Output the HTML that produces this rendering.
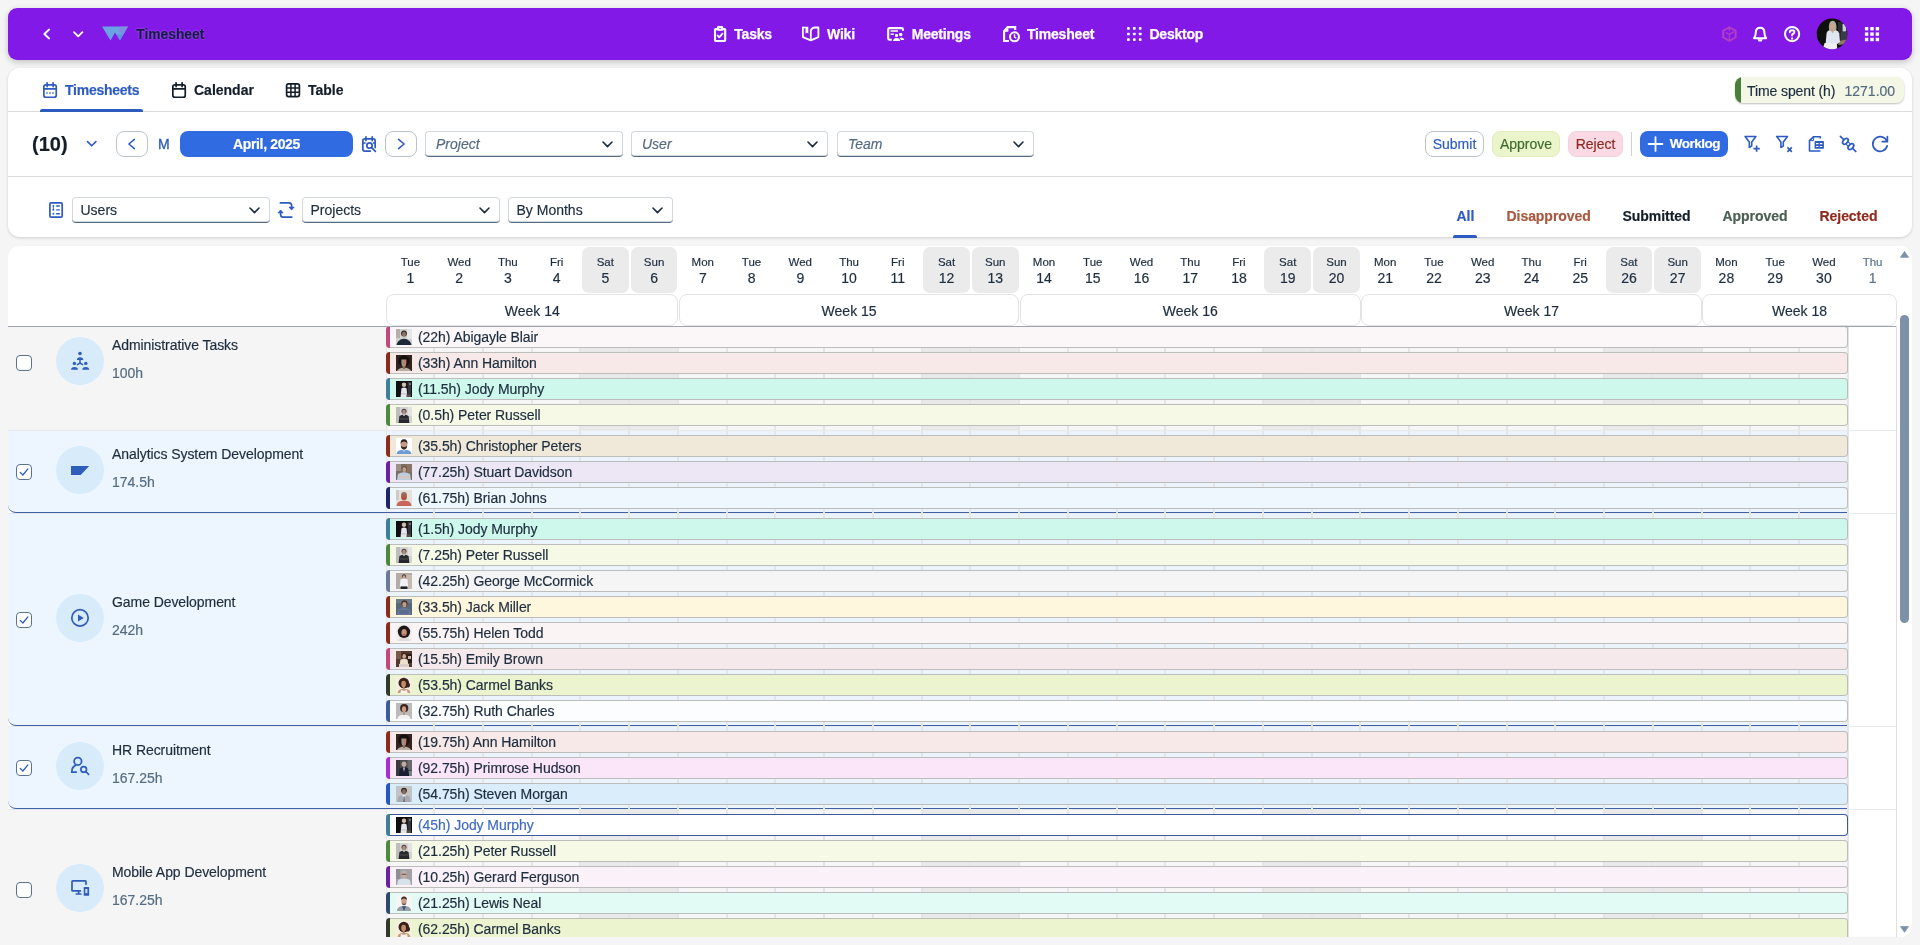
<!DOCTYPE html><html><head><meta charset="utf-8"><title>Timesheet</title><style>
*{box-sizing:border-box}
html,body{margin:0;padding:0}
body{width:1920px;height:945px;overflow:hidden;position:relative;background:#f5f5f5;font-family:"Liberation Sans",sans-serif;font-size:14px;color:#1d2d3e}
#root{position:absolute;left:0;top:0;width:1920px;height:945px;overflow:hidden;will-change:transform;-webkit-text-stroke:0.18px currentColor}
.abs{position:absolute}
.hdr{position:absolute;left:8px;top:8px;width:1904px;height:52px;background:#8319e6;border-radius:9px;box-shadow:0 2px 6px rgba(0,0,0,.22)}
.ov{position:absolute;left:0;top:0;pointer-events:none}
.nav{position:absolute;top:26px;line-height:16px;color:#fff;font-weight:bold;font-size:14px;white-space:nowrap;letter-spacing:-0.2px;-webkit-text-stroke:0.25px currentColor}
.p1{position:absolute;left:8px;top:68px;width:1904px;height:169px;background:#fff;border-radius:12px;box-shadow:0 1px 3px rgba(0,0,0,.16)}
.p2{position:absolute;left:8px;top:246px;width:1904px;height:691px;background:#fff;border-radius:12px;overflow:hidden}
.t{position:absolute;white-space:nowrap;line-height:16px}
.b{font-weight:bold}
.sel{position:absolute;height:26px;background:#fff;border-radius:4px;box-shadow:inset 0 0 0 1px #d3d8dd;border-bottom:1px solid #556b82}
.sel .tx{position:absolute;left:8.5px;top:5px;line-height:16px;white-space:nowrap}
.sel .ph{font-style:italic;color:#556b82;left:11px}
.sel svg{position:absolute;right:10px;top:10px}
.btn{position:absolute;top:131px;height:26px;border-radius:8px;line-height:24px;text-align:center;border:1px solid #bcc3ca;white-space:nowrap}
.hl{position:absolute;left:8px;width:1904px;height:1px;background:#d9dbdd}
.day{position:absolute;top:247px;height:46px;border-radius:7px;text-align:center}
.day.we{background:#ebebeb}
.day .d1{position:absolute;left:0;right:0;top:9px;font-size:11.5px;line-height:13px}
.day .d2{position:absolute;left:0;right:0;top:22.5px;font-size:14px;line-height:16px}
.wk{position:absolute;top:294px;height:32px;border:1px solid #e3e3e3;border-radius:8px;text-align:center;line-height:33.4px;background:#fff}
.row{position:absolute;left:8px;width:378px}
.row.s{background:#edf6fe;border-bottom:1px solid #3f5fa8;border-bottom-left-radius:8px}
.grow{position:absolute}
.bar{position:absolute;height:22px;border:1px solid #bdbebb;border-left:none;border-radius:4px}
.bar .st{position:absolute;left:0;top:-1px;width:4px;height:22px;border-radius:4px 0 0 4px}
.bar .tx{position:absolute;left:32px;top:2.4px;line-height:16px;white-space:nowrap;letter-spacing:-0.06px}
.av{position:absolute;left:10px;top:2px;width:16px;height:16px;overflow:hidden}
.cb{position:absolute;left:16px;width:16px;height:16px;border:1px solid #5b738b;border-radius:4px;background:#fff}
.circ{position:absolute;left:56px;width:48px;height:48px;border-radius:50%;background:#d8ebfb}
</style></head><body><div id="root"><div class="hdr"></div>
<div class="nav" style="left:136.3px;color:#17194b;top:27px;-webkit-text-stroke:0.2px currentColor;text-shadow:0 0 2px rgba(196,160,255,.7);font-size:13.8px;letter-spacing:0">Timesheet</div>
<div class="nav" style="left:734.3px;color:#fff">Tasks</div>
<div class="nav" style="left:827px;color:#fff">Wiki</div>
<div class="nav" style="left:911.7px;color:#fff">Meetings</div>
<div class="nav" style="left:1027px;color:#fff">Timesheet</div>
<div class="nav" style="left:1149.4px;color:#fff">Desktop</div>
<div class="p1"></div>
<div class="hl" style="top:111px"></div>
<div class="hl" style="top:176px"></div>
<div class="t b" style="left:65px;top:82px;color:#2d5bc0;letter-spacing:-0.25px">Timesheets</div>
<div class="abs" style="left:40px;top:109px;width:103px;height:3px;background:#2d5bc0;border-radius:2px 2px 0 0"></div>
<div class="t b" style="left:194px;top:82px;color:#131e29">Calendar</div>
<div class="t b" style="left:308px;top:82px;color:#131e29">Table</div>
<div class="abs" style="left:1735px;top:77px;width:169px;height:26px;border-radius:8px;background:#f5f7e6;box-shadow:0 1px 2px rgba(0,0,0,.25);overflow:hidden"><div class="abs" style="left:0;top:0;width:6px;height:26px;background:#4a7f3a"></div></div>
<div class="t" style="left:1747px;top:82.5px;letter-spacing:-0.1px">Time spent (h)</div>
<div class="t" style="left:1844.5px;top:82.5px;color:#556b82">1271.00</div>
<div class="t b" style="left:32px;top:133.3px;font-size:20px;line-height:22px;color:#131e29">(10)</div>
<div class="abs" style="left:116px;top:131px;width:31.5px;height:26px;border:1px solid #bcc3ca;border-radius:8px;background:#fff"></div>
<div class="t" style="left:158px;top:136px;color:#2d5bc0;-webkit-text-stroke:0.35px #2d5bc0">M</div>
<div class="abs b" style="left:180px;top:131px;width:173px;height:26px;border-radius:8px;background:#306be2;color:#fff;text-align:center;line-height:26px;letter-spacing:-0.35px">April, 2025</div>
<div class="abs" style="left:385px;top:131px;width:31.7px;height:26px;border:1px solid #bcc3ca;border-radius:8px;background:#fff"></div>
<div class="sel" style="left:425px;top:131px;width:198px"><span class="tx ph">Project</span><svg width="11" height="7" viewBox="0 0 11 7"><path d="M1 1 L5.5 5.6 L10 1" fill="none" stroke="#1d2d3e" stroke-width="1.6" stroke-linecap="round" stroke-linejoin="round"/></svg></div>
<div class="sel" style="left:631px;top:131px;width:197px"><span class="tx ph">User</span><svg width="11" height="7" viewBox="0 0 11 7"><path d="M1 1 L5.5 5.6 L10 1" fill="none" stroke="#1d2d3e" stroke-width="1.6" stroke-linecap="round" stroke-linejoin="round"/></svg></div>
<div class="sel" style="left:837px;top:131px;width:197px"><span class="tx ph">Team</span><svg width="11" height="7" viewBox="0 0 11 7"><path d="M1 1 L5.5 5.6 L10 1" fill="none" stroke="#1d2d3e" stroke-width="1.6" stroke-linecap="round" stroke-linejoin="round"/></svg></div>
<div class="btn" style="left:1425px;width:59px;color:#2d5bc0;background:#fff">Submit</div>
<div class="btn" style="left:1492px;width:68px;color:#3f6b2f;background:#ebf5cb;border-color:#e6e9b8">Approve</div>
<div class="btn" style="left:1568px;width:55px;color:#8b2a1e;background:#f9d9e3;border-color:#f3d3dc">Reject</div>
<div class="abs" style="left:1631px;top:132px;width:1px;height:24px;background:#d0d3d6"></div>
<div class="abs b" style="left:1640px;top:131px;width:88px;height:26px;border-radius:8px;background:#306be2;color:#fff;line-height:26px"><span style="position:absolute;left:29.7px;font-size:13.5px;letter-spacing:-0.5px">Worklog</span></div>
<div class="sel" style="left:72px;top:197px;width:198px"><span class="tx">Users</span><svg width="11" height="7" viewBox="0 0 11 7"><path d="M1 1 L5.5 5.6 L10 1" fill="none" stroke="#1d2d3e" stroke-width="1.6" stroke-linecap="round" stroke-linejoin="round"/></svg></div>
<div class="sel" style="left:302px;top:197px;width:198px"><span class="tx">Projects</span><svg width="11" height="7" viewBox="0 0 11 7"><path d="M1 1 L5.5 5.6 L10 1" fill="none" stroke="#1d2d3e" stroke-width="1.6" stroke-linecap="round" stroke-linejoin="round"/></svg></div>
<div class="sel" style="left:508px;top:197px;width:165px"><span class="tx">By Months</span><svg width="11" height="7" viewBox="0 0 11 7"><path d="M1 1 L5.5 5.6 L10 1" fill="none" stroke="#1d2d3e" stroke-width="1.6" stroke-linecap="round" stroke-linejoin="round"/></svg></div>
<div class="t b" style="left:1456.5px;top:208.4px;color:#2d5bc0;letter-spacing:-0.05px">All</div>
<div class="t b" style="left:1506.5px;top:208.4px;color:#a8593f;letter-spacing:-0.05px">Disapproved</div>
<div class="t b" style="left:1622.5px;top:208.4px;color:#131e29;letter-spacing:-0.05px">Submitted</div>
<div class="t b" style="left:1722.5px;top:208.4px;color:#4a5e52;letter-spacing:-0.05px">Approved</div>
<div class="t b" style="left:1819.5px;top:208.4px;color:#8e2a1e;letter-spacing:-0.05px">Rejected</div>
<div class="abs" style="left:1453px;top:234.8px;width:24px;height:3px;background:#2d5bc0;border-radius:2px 2px 0 0"></div>
<div class="p2"></div>
<div class="day" style="left:387.00px;width:46.74px"><div class="d1">Tue</div><div class="d2">1</div></div>
<div class="day" style="left:435.74px;width:46.74px"><div class="d1">Wed</div><div class="d2">2</div></div>
<div class="day" style="left:484.48px;width:46.74px"><div class="d1">Thu</div><div class="d2">3</div></div>
<div class="day" style="left:533.23px;width:46.74px"><div class="d1">Fri</div><div class="d2">4</div></div>
<div class="day we" style="left:581.97px;width:46.74px"><div class="d1">Sat</div><div class="d2">5</div></div>
<div class="day we" style="left:630.71px;width:46.74px"><div class="d1">Sun</div><div class="d2">6</div></div>
<div class="day" style="left:679.45px;width:46.74px"><div class="d1">Mon</div><div class="d2">7</div></div>
<div class="day" style="left:728.19px;width:46.74px"><div class="d1">Tue</div><div class="d2">8</div></div>
<div class="day" style="left:776.94px;width:46.74px"><div class="d1">Wed</div><div class="d2">9</div></div>
<div class="day" style="left:825.68px;width:46.74px"><div class="d1">Thu</div><div class="d2">10</div></div>
<div class="day" style="left:874.42px;width:46.74px"><div class="d1">Fri</div><div class="d2">11</div></div>
<div class="day we" style="left:923.16px;width:46.74px"><div class="d1">Sat</div><div class="d2">12</div></div>
<div class="day we" style="left:971.90px;width:46.74px"><div class="d1">Sun</div><div class="d2">13</div></div>
<div class="day" style="left:1020.65px;width:46.74px"><div class="d1">Mon</div><div class="d2">14</div></div>
<div class="day" style="left:1069.39px;width:46.74px"><div class="d1">Tue</div><div class="d2">15</div></div>
<div class="day" style="left:1118.13px;width:46.74px"><div class="d1">Wed</div><div class="d2">16</div></div>
<div class="day" style="left:1166.87px;width:46.74px"><div class="d1">Thu</div><div class="d2">17</div></div>
<div class="day" style="left:1215.61px;width:46.74px"><div class="d1">Fri</div><div class="d2">18</div></div>
<div class="day we" style="left:1264.35px;width:46.74px"><div class="d1">Sat</div><div class="d2">19</div></div>
<div class="day we" style="left:1313.10px;width:46.74px"><div class="d1">Sun</div><div class="d2">20</div></div>
<div class="day" style="left:1361.84px;width:46.74px"><div class="d1">Mon</div><div class="d2">21</div></div>
<div class="day" style="left:1410.58px;width:46.74px"><div class="d1">Tue</div><div class="d2">22</div></div>
<div class="day" style="left:1459.32px;width:46.74px"><div class="d1">Wed</div><div class="d2">23</div></div>
<div class="day" style="left:1508.06px;width:46.74px"><div class="d1">Thu</div><div class="d2">24</div></div>
<div class="day" style="left:1556.81px;width:46.74px"><div class="d1">Fri</div><div class="d2">25</div></div>
<div class="day we" style="left:1605.55px;width:46.74px"><div class="d1">Sat</div><div class="d2">26</div></div>
<div class="day we" style="left:1654.29px;width:46.74px"><div class="d1">Sun</div><div class="d2">27</div></div>
<div class="day" style="left:1703.03px;width:46.74px"><div class="d1">Mon</div><div class="d2">28</div></div>
<div class="day" style="left:1751.77px;width:46.74px"><div class="d1">Tue</div><div class="d2">29</div></div>
<div class="day" style="left:1800.52px;width:46.74px"><div class="d1">Wed</div><div class="d2">30</div></div>
<div class="day" style="left:1849.26px;width:46.74px;color:#5b738b"><div class="d1">Thu</div><div class="d2">1</div></div>
<div class="wk" style="left:386.30px;width:291.95px">Week 14</div>
<div class="wk" style="left:678.75px;width:340.69px">Week 15</div>
<div class="wk" style="left:1019.95px;width:340.69px">Week 16</div>
<div class="wk" style="left:1361.14px;width:340.69px">Week 17</div>
<div class="wk" style="left:1702.33px;width:194.47px">Week 18</div>
<div class="row" style="top:326px;height:104px;background:#f5f5f5;"></div>
<div class="cb" style="top:355px"></div>
<div class="circ" style="top:337px"></div>
<div class="t" style="left:112px;top:337.1px;color:#1d2d3e;letter-spacing:-0.07px">Administrative Tasks</div>
<div class="t" style="left:112px;top:365.3px;color:#556b82">100h</div>
<svg class="ov" width="1920" height="945" viewBox="0 0 1920 945"><g transform="translate(0,0)" fill="#2f5dbc" stroke="none"><circle cx="80" cy="353.5" r="1.8"/><path d="M76.9 359.9 Q76.9 357.2 80 357.2 Q83.3 357.2 83.3 359.9 Z"/><circle cx="74.4" cy="363.4" r="1.7"/><circle cx="85.8" cy="363.4" r="1.7"/><path d="M71 369.8 Q71 366.9 74.5 366.9 Q78 366.9 78 369.8 Z"/><path d="M82.2 369.8 Q82.2 366.9 85.7 366.9 Q89.2 366.9 89.2 369.8 Z"/><path d="M80 359.5 V363 M80 363 L77.4 364.6 M80 363 L82.6 364.6" stroke="#2f5dbc" stroke-width="1.5" fill="none" stroke-linecap="round"/></g></svg>
<div class="grow" style="left:386.0px;top:326px;width:1511px;height:104px;background:#fff">
<div class="abs" style="left:0px;top:0;width:1462.76px;height:104px;background:#e5e5e8"></div>
<div class="abs" style="left:1.00px;top:0;width:46.24px;height:104px;background:#f6f6f6"></div>
<div class="abs" style="left:49.24px;top:0;width:46.74px;height:104px;background:#f6f6f6"></div>
<div class="abs" style="left:97.98px;top:0;width:46.74px;height:104px;background:#f6f6f6"></div>
<div class="abs" style="left:146.73px;top:0;width:46.74px;height:104px;background:#f6f6f6"></div>
<div class="abs" style="left:195.47px;top:0;width:46.74px;height:104px;background:#e9e9e9"></div>
<div class="abs" style="left:244.21px;top:0;width:46.74px;height:104px;background:#e9e9e9"></div>
<div class="abs" style="left:292.95px;top:0;width:46.74px;height:104px;background:#f6f6f6"></div>
<div class="abs" style="left:341.69px;top:0;width:46.74px;height:104px;background:#f6f6f6"></div>
<div class="abs" style="left:390.44px;top:0;width:46.74px;height:104px;background:#f6f6f6"></div>
<div class="abs" style="left:439.18px;top:0;width:46.74px;height:104px;background:#f6f6f6"></div>
<div class="abs" style="left:487.92px;top:0;width:46.74px;height:104px;background:#f6f6f6"></div>
<div class="abs" style="left:536.66px;top:0;width:46.74px;height:104px;background:#e9e9e9"></div>
<div class="abs" style="left:585.40px;top:0;width:46.74px;height:104px;background:#e9e9e9"></div>
<div class="abs" style="left:634.15px;top:0;width:46.74px;height:104px;background:#f6f6f6"></div>
<div class="abs" style="left:682.89px;top:0;width:46.74px;height:104px;background:#f6f6f6"></div>
<div class="abs" style="left:731.63px;top:0;width:46.74px;height:104px;background:#f6f6f6"></div>
<div class="abs" style="left:780.37px;top:0;width:46.74px;height:104px;background:#f6f6f6"></div>
<div class="abs" style="left:829.11px;top:0;width:46.74px;height:104px;background:#f6f6f6"></div>
<div class="abs" style="left:877.85px;top:0;width:46.74px;height:104px;background:#e9e9e9"></div>
<div class="abs" style="left:926.60px;top:0;width:46.74px;height:104px;background:#e9e9e9"></div>
<div class="abs" style="left:975.34px;top:0;width:46.74px;height:104px;background:#f6f6f6"></div>
<div class="abs" style="left:1024.08px;top:0;width:46.74px;height:104px;background:#f6f6f6"></div>
<div class="abs" style="left:1072.82px;top:0;width:46.74px;height:104px;background:#f6f6f6"></div>
<div class="abs" style="left:1121.56px;top:0;width:46.74px;height:104px;background:#f6f6f6"></div>
<div class="abs" style="left:1170.31px;top:0;width:46.74px;height:104px;background:#f6f6f6"></div>
<div class="abs" style="left:1219.05px;top:0;width:46.74px;height:104px;background:#e9e9e9"></div>
<div class="abs" style="left:1267.79px;top:0;width:46.74px;height:104px;background:#e9e9e9"></div>
<div class="abs" style="left:1316.53px;top:0;width:46.74px;height:104px;background:#f6f6f6"></div>
<div class="abs" style="left:1365.27px;top:0;width:46.74px;height:104px;background:#f6f6f6"></div>
<div class="abs" style="left:1414.02px;top:0;width:46.74px;height:104px;background:#f6f6f6"></div>
</div>
<div class="bar" style="left:386.0px;top:326px;width:1462.26px;background:#fbf6f7"><div class="st" style="background:#c2487b"></div><svg class="av" width="16" height="16" viewBox="0 0 16 16"><rect width="16" height="16" fill="#cfd0d0"/><rect x="11" y="0" width="5" height="10" fill="#e4e6e8"/><rect x="0" y="0" width="4" height="9" fill="#b4b0aa"/><ellipse cx="8" cy="17" rx="7.6" ry="7.2" fill="#1e2838"/><circle cx="8" cy="4.4" r="2.9" fill="#2a221e"/><ellipse cx="8" cy="5.2" rx="2" ry="2.6" fill="#8e7464"/></svg><div class="tx">(22h) Abigayle Blair</div></div>
<div class="bar" style="left:386.0px;top:352px;width:1462.26px;background:#f7e9e8"><div class="st" style="background:#8c2b1b"></div><svg class="av" width="16" height="16" viewBox="0 0 16 16"><rect width="16" height="16" fill="#33241f"/><ellipse cx="8" cy="18" rx="7.5" ry="5.5" fill="#b9aea4"/><circle cx="8" cy="6" r="5.8" fill="#17100e"/><path d="M5.4 4.4 H8 V12.6 Q5.4 11.5 5.4 8 Z" fill="#9c9088"/><path d="M8 4.4 H10.4 V8 Q10.4 11.5 8 12.6 Z" fill="#bd7a68"/><rect x="7" y="11.5" width="2" height="2.5" fill="#8a6a5a"/></svg><div class="tx">(33h) Ann Hamilton</div></div>
<div class="bar" style="left:386.0px;top:378px;width:1462.26px;background:#cef8ec"><div class="st" style="background:#3d7f97"></div><svg class="av" width="16" height="16" viewBox="0 0 16 16"><rect width="16" height="16" fill="#100f13"/><rect x="11.6" y="1" width="3.4" height="13" fill="#34343a"/><rect x="13.5" y="2" width="1" height="2" fill="#b0b0b8"/><path d="M4.6 16 L5.4 7.4 Q8 5.4 10.6 7.4 L11.4 16 Z" fill="#e6e8ee"/><rect x="5" y="12.4" width="6" height="0.9" fill="#b8bcc6"/><circle cx="8" cy="4" r="2.1" fill="#d6c2b2"/><path d="M5.8 4.4 Q5.6 1.6 8 1.6 Q10.4 1.6 10.2 4.4 Q9.6 2.8 8 2.9 Q6.4 2.8 5.8 4.4Z" fill="#cbbd9f"/><rect x="10.5" y="13.5" width="4.5" height="2.5" fill="#5a5048"/></svg><div class="tx">(11.5h) Jody Murphy</div></div>
<div class="bar" style="left:386.0px;top:404px;width:1462.26px;background:#f7f9e7"><div class="st" style="background:#4b8a3b"></div><svg class="av" width="16" height="16" viewBox="0 0 16 16"><rect width="16" height="16" fill="#d3d3d3"/><rect x="0" y="0" width="4" height="16" fill="#bdbdbd"/><rect x="12" y="0" width="4" height="9" fill="#e2e2e2"/><path d="M2.6 16 L3.4 9 Q8 5.8 12.6 9 L13.4 16 Z" fill="#28282c"/><rect x="4" y="11" width="8" height="2" fill="#3a3a40"/><circle cx="8" cy="4.2" r="2.5" fill="#4a3c34"/><ellipse cx="8" cy="5" rx="1.8" ry="2.3" fill="#b09080"/><rect x="7.3" y="7" width="1.4" height="2" fill="#d8d8d8"/></svg><div class="tx">(0.5h) Peter Russell</div></div>
<div class="row s" style="top:430px;height:83px;border-top:1px solid #e5e7e9;"></div>
<div class="cb" style="top:464px"><svg class="abs" style="left:0;top:0" width="14" height="14" viewBox="0 0 14 14"><path d="M3.2 7.4 L5.9 10 L10.9 3.9" fill="none" stroke="#2d5bc0" stroke-width="1.3" stroke-linecap="round" stroke-linejoin="round"/></svg></div>
<div class="circ" style="top:446px"></div>
<div class="t" style="left:112px;top:446.1px;color:#1d2d3e;letter-spacing:-0.07px">Analytics System Development</div>
<div class="t" style="left:112px;top:474.3px;color:#556b82">174.5h</div>
<svg class="ov" width="1920" height="945" viewBox="0 0 1920 945"><path transform="translate(0,0)" d="M71 466 H89.2 L80.7 475 H71 Z" fill="#2f5dbc"/></svg>
<div class="grow" style="left:386.0px;top:430px;width:1511px;height:83px;background:#fff">
<div class="abs" style="left:0px;top:0;width:1462.76px;height:83px;background:#e5e5e8"></div>
<div class="abs" style="left:1.00px;top:0;width:46.24px;height:83px;background:#ebf4fc"></div>
<div class="abs" style="left:49.24px;top:0;width:46.74px;height:83px;background:#ebf4fc"></div>
<div class="abs" style="left:97.98px;top:0;width:46.74px;height:83px;background:#ebf4fc"></div>
<div class="abs" style="left:146.73px;top:0;width:46.74px;height:83px;background:#ebf4fc"></div>
<div class="abs" style="left:195.47px;top:0;width:46.74px;height:83px;background:#ebf4fc"></div>
<div class="abs" style="left:244.21px;top:0;width:46.74px;height:83px;background:#ebf4fc"></div>
<div class="abs" style="left:292.95px;top:0;width:46.74px;height:83px;background:#ebf4fc"></div>
<div class="abs" style="left:341.69px;top:0;width:46.74px;height:83px;background:#ebf4fc"></div>
<div class="abs" style="left:390.44px;top:0;width:46.74px;height:83px;background:#ebf4fc"></div>
<div class="abs" style="left:439.18px;top:0;width:46.74px;height:83px;background:#ebf4fc"></div>
<div class="abs" style="left:487.92px;top:0;width:46.74px;height:83px;background:#ebf4fc"></div>
<div class="abs" style="left:536.66px;top:0;width:46.74px;height:83px;background:#ebf4fc"></div>
<div class="abs" style="left:585.40px;top:0;width:46.74px;height:83px;background:#ebf4fc"></div>
<div class="abs" style="left:634.15px;top:0;width:46.74px;height:83px;background:#ebf4fc"></div>
<div class="abs" style="left:682.89px;top:0;width:46.74px;height:83px;background:#ebf4fc"></div>
<div class="abs" style="left:731.63px;top:0;width:46.74px;height:83px;background:#ebf4fc"></div>
<div class="abs" style="left:780.37px;top:0;width:46.74px;height:83px;background:#ebf4fc"></div>
<div class="abs" style="left:829.11px;top:0;width:46.74px;height:83px;background:#ebf4fc"></div>
<div class="abs" style="left:877.85px;top:0;width:46.74px;height:83px;background:#ebf4fc"></div>
<div class="abs" style="left:926.60px;top:0;width:46.74px;height:83px;background:#ebf4fc"></div>
<div class="abs" style="left:975.34px;top:0;width:46.74px;height:83px;background:#ebf4fc"></div>
<div class="abs" style="left:1024.08px;top:0;width:46.74px;height:83px;background:#ebf4fc"></div>
<div class="abs" style="left:1072.82px;top:0;width:46.74px;height:83px;background:#ebf4fc"></div>
<div class="abs" style="left:1121.56px;top:0;width:46.74px;height:83px;background:#ebf4fc"></div>
<div class="abs" style="left:1170.31px;top:0;width:46.74px;height:83px;background:#ebf4fc"></div>
<div class="abs" style="left:1219.05px;top:0;width:46.74px;height:83px;background:#ebf4fc"></div>
<div class="abs" style="left:1267.79px;top:0;width:46.74px;height:83px;background:#ebf4fc"></div>
<div class="abs" style="left:1316.53px;top:0;width:46.74px;height:83px;background:#ebf4fc"></div>
<div class="abs" style="left:1365.27px;top:0;width:46.74px;height:83px;background:#ebf4fc"></div>
<div class="abs" style="left:1414.02px;top:0;width:46.74px;height:83px;background:#ebf4fc"></div>
<div class="abs" style="left:0;top:0;width:1511px;height:1px;background:#e8eaec"></div>
<div class="abs" style="left:0;top:82px;width:1462.26px;height:1px;background:#3f5fa8"></div>
<div class="abs" style="left:47.24px;top:82px;width:2px;height:1px;background:#e5e5e8"></div>
<div class="abs" style="left:95.98px;top:82px;width:2px;height:1px;background:#e5e5e8"></div>
<div class="abs" style="left:144.73px;top:82px;width:2px;height:1px;background:#e5e5e8"></div>
<div class="abs" style="left:193.47px;top:82px;width:2px;height:1px;background:#e5e5e8"></div>
<div class="abs" style="left:242.21px;top:82px;width:2px;height:1px;background:#e5e5e8"></div>
<div class="abs" style="left:290.95px;top:82px;width:2px;height:1px;background:#e5e5e8"></div>
<div class="abs" style="left:339.69px;top:82px;width:2px;height:1px;background:#e5e5e8"></div>
<div class="abs" style="left:388.44px;top:82px;width:2px;height:1px;background:#e5e5e8"></div>
<div class="abs" style="left:437.18px;top:82px;width:2px;height:1px;background:#e5e5e8"></div>
<div class="abs" style="left:485.92px;top:82px;width:2px;height:1px;background:#e5e5e8"></div>
<div class="abs" style="left:534.66px;top:82px;width:2px;height:1px;background:#e5e5e8"></div>
<div class="abs" style="left:583.40px;top:82px;width:2px;height:1px;background:#e5e5e8"></div>
<div class="abs" style="left:632.15px;top:82px;width:2px;height:1px;background:#e5e5e8"></div>
<div class="abs" style="left:680.89px;top:82px;width:2px;height:1px;background:#e5e5e8"></div>
<div class="abs" style="left:729.63px;top:82px;width:2px;height:1px;background:#e5e5e8"></div>
<div class="abs" style="left:778.37px;top:82px;width:2px;height:1px;background:#e5e5e8"></div>
<div class="abs" style="left:827.11px;top:82px;width:2px;height:1px;background:#e5e5e8"></div>
<div class="abs" style="left:875.85px;top:82px;width:2px;height:1px;background:#e5e5e8"></div>
<div class="abs" style="left:924.60px;top:82px;width:2px;height:1px;background:#e5e5e8"></div>
<div class="abs" style="left:973.34px;top:82px;width:2px;height:1px;background:#e5e5e8"></div>
<div class="abs" style="left:1022.08px;top:82px;width:2px;height:1px;background:#e5e5e8"></div>
<div class="abs" style="left:1070.82px;top:82px;width:2px;height:1px;background:#e5e5e8"></div>
<div class="abs" style="left:1119.56px;top:82px;width:2px;height:1px;background:#e5e5e8"></div>
<div class="abs" style="left:1168.31px;top:82px;width:2px;height:1px;background:#e5e5e8"></div>
<div class="abs" style="left:1217.05px;top:82px;width:2px;height:1px;background:#e5e5e8"></div>
<div class="abs" style="left:1265.79px;top:82px;width:2px;height:1px;background:#e5e5e8"></div>
<div class="abs" style="left:1314.53px;top:82px;width:2px;height:1px;background:#e5e5e8"></div>
<div class="abs" style="left:1363.27px;top:82px;width:2px;height:1px;background:#e5e5e8"></div>
<div class="abs" style="left:1412.02px;top:82px;width:2px;height:1px;background:#e5e5e8"></div>
<div class="abs" style="left:1460.76px;top:82px;width:2px;height:1px;background:#e5e5e8"></div>
</div>
<div class="bar" style="left:386.0px;top:435px;width:1462.26px;background:#f0e9d9"><div class="st" style="background:#8c2b1b"></div><svg class="av" width="16" height="16" viewBox="0 0 16 16"><rect width="16" height="16" fill="#ffffff"/><path d="M0.5 16 Q1 12.4 5 12 L11 12 Q15 12.4 15.5 16 Z" fill="#6b9bd4"/><path d="M6.5 12 L8 14.5 L9.5 12 Z" fill="#a8c6ea"/><ellipse cx="8" cy="6.6" rx="3.3" ry="4.6" fill="#c59c86"/><path d="M4.6 6 Q4.2 1.2 8 1.2 Q11.8 1.2 11.4 6 Q10.8 3.4 8 3.5 Q5.2 3.4 4.6 6Z" fill="#2b211c"/><path d="M4.8 7.6 Q5 11.6 8 11.8 Q11 11.6 11.2 7.6 Q10.4 9.2 8 9 Q5.6 9.2 4.8 7.6Z" fill="#3a2c24"/></svg><div class="tx">(35.5h) Christopher Peters</div></div>
<div class="bar" style="left:386.0px;top:461px;width:1462.26px;background:#ede6f5"><div class="st" style="background:#6a20a1"></div><svg class="av" width="16" height="16" viewBox="0 0 16 16"><rect width="16" height="16" fill="#7d6e64"/><rect x="0" y="0" width="5" height="7" fill="#9c9088"/><rect x="11" y="0" width="5" height="8" fill="#8a7468"/><path d="M1 16 L2 10 Q8 6.6 14 10 L15 16 Z" fill="#becde0"/><rect x="3" y="12" width="10" height="2.2" fill="#d6c6ba"/><circle cx="8.3" cy="4.6" r="2.6" fill="#6a5244"/><ellipse cx="8.3" cy="5.4" rx="1.9" ry="2.5" fill="#c29c86"/></svg><div class="tx">(77.25h) Stuart Davidson</div></div>
<div class="bar" style="left:386.0px;top:487px;width:1462.26px;background:#eef6fe"><div class="st" style="background:#1b2567"></div><svg class="av" width="16" height="16" viewBox="0 0 16 16"><rect width="16" height="16" fill="#e8e0da"/><rect x="0" y="0" width="3" height="10" fill="#d0cac6"/><path d="M0.5 16 Q1 11.4 5 11 L11 11 Q15 11.4 15.5 16 Z" fill="#c8665a"/><ellipse cx="8" cy="6.4" rx="3" ry="4" fill="#a8604a"/><path d="M5.2 5.4 Q5 2 8 2 Q11 2 10.8 5.4 Q10 3.6 8 3.7 Q6 3.6 5.2 5.4Z" fill="#8a7a72"/><rect x="6.2" y="7.6" width="3.6" height="1.3" fill="#c83a3a"/></svg><div class="tx">(61.75h) Brian Johns</div></div>
<div class="row s" style="top:513px;height:213px;border-top:1px solid #e5e7e9;"></div>
<div class="cb" style="top:612px"><svg class="abs" style="left:0;top:0" width="14" height="14" viewBox="0 0 14 14"><path d="M3.2 7.4 L5.9 10 L10.9 3.9" fill="none" stroke="#2d5bc0" stroke-width="1.3" stroke-linecap="round" stroke-linejoin="round"/></svg></div>
<div class="circ" style="top:594px"></div>
<div class="t" style="left:112px;top:594.1px;color:#1d2d3e;letter-spacing:-0.07px">Game Development</div>
<div class="t" style="left:112px;top:622.3px;color:#556b82">242h</div>
<svg class="ov" width="1920" height="945" viewBox="0 0 1920 945"><g transform="translate(0,0)"><circle cx="80" cy="617.9" r="8.2" fill="none" stroke="#2f5dbc" stroke-width="1.7"/><path d="M78 614.6 V621.4 L83.8 618 Z" fill="#2f5dbc"/></g></svg>
<div class="grow" style="left:386.0px;top:513px;width:1511px;height:213px;background:#fff">
<div class="abs" style="left:0px;top:0;width:1462.76px;height:213px;background:#e5e5e8"></div>
<div class="abs" style="left:1.00px;top:0;width:46.24px;height:213px;background:#ebf4fc"></div>
<div class="abs" style="left:49.24px;top:0;width:46.74px;height:213px;background:#ebf4fc"></div>
<div class="abs" style="left:97.98px;top:0;width:46.74px;height:213px;background:#ebf4fc"></div>
<div class="abs" style="left:146.73px;top:0;width:46.74px;height:213px;background:#ebf4fc"></div>
<div class="abs" style="left:195.47px;top:0;width:46.74px;height:213px;background:#ebf4fc"></div>
<div class="abs" style="left:244.21px;top:0;width:46.74px;height:213px;background:#ebf4fc"></div>
<div class="abs" style="left:292.95px;top:0;width:46.74px;height:213px;background:#ebf4fc"></div>
<div class="abs" style="left:341.69px;top:0;width:46.74px;height:213px;background:#ebf4fc"></div>
<div class="abs" style="left:390.44px;top:0;width:46.74px;height:213px;background:#ebf4fc"></div>
<div class="abs" style="left:439.18px;top:0;width:46.74px;height:213px;background:#ebf4fc"></div>
<div class="abs" style="left:487.92px;top:0;width:46.74px;height:213px;background:#ebf4fc"></div>
<div class="abs" style="left:536.66px;top:0;width:46.74px;height:213px;background:#ebf4fc"></div>
<div class="abs" style="left:585.40px;top:0;width:46.74px;height:213px;background:#ebf4fc"></div>
<div class="abs" style="left:634.15px;top:0;width:46.74px;height:213px;background:#ebf4fc"></div>
<div class="abs" style="left:682.89px;top:0;width:46.74px;height:213px;background:#ebf4fc"></div>
<div class="abs" style="left:731.63px;top:0;width:46.74px;height:213px;background:#ebf4fc"></div>
<div class="abs" style="left:780.37px;top:0;width:46.74px;height:213px;background:#ebf4fc"></div>
<div class="abs" style="left:829.11px;top:0;width:46.74px;height:213px;background:#ebf4fc"></div>
<div class="abs" style="left:877.85px;top:0;width:46.74px;height:213px;background:#ebf4fc"></div>
<div class="abs" style="left:926.60px;top:0;width:46.74px;height:213px;background:#ebf4fc"></div>
<div class="abs" style="left:975.34px;top:0;width:46.74px;height:213px;background:#ebf4fc"></div>
<div class="abs" style="left:1024.08px;top:0;width:46.74px;height:213px;background:#ebf4fc"></div>
<div class="abs" style="left:1072.82px;top:0;width:46.74px;height:213px;background:#ebf4fc"></div>
<div class="abs" style="left:1121.56px;top:0;width:46.74px;height:213px;background:#ebf4fc"></div>
<div class="abs" style="left:1170.31px;top:0;width:46.74px;height:213px;background:#ebf4fc"></div>
<div class="abs" style="left:1219.05px;top:0;width:46.74px;height:213px;background:#ebf4fc"></div>
<div class="abs" style="left:1267.79px;top:0;width:46.74px;height:213px;background:#ebf4fc"></div>
<div class="abs" style="left:1316.53px;top:0;width:46.74px;height:213px;background:#ebf4fc"></div>
<div class="abs" style="left:1365.27px;top:0;width:46.74px;height:213px;background:#ebf4fc"></div>
<div class="abs" style="left:1414.02px;top:0;width:46.74px;height:213px;background:#ebf4fc"></div>
<div class="abs" style="left:0;top:0;width:1511px;height:1px;background:#e8eaec"></div>
<div class="abs" style="left:0;top:212px;width:1462.26px;height:1px;background:#3f5fa8"></div>
<div class="abs" style="left:47.24px;top:212px;width:2px;height:1px;background:#e5e5e8"></div>
<div class="abs" style="left:95.98px;top:212px;width:2px;height:1px;background:#e5e5e8"></div>
<div class="abs" style="left:144.73px;top:212px;width:2px;height:1px;background:#e5e5e8"></div>
<div class="abs" style="left:193.47px;top:212px;width:2px;height:1px;background:#e5e5e8"></div>
<div class="abs" style="left:242.21px;top:212px;width:2px;height:1px;background:#e5e5e8"></div>
<div class="abs" style="left:290.95px;top:212px;width:2px;height:1px;background:#e5e5e8"></div>
<div class="abs" style="left:339.69px;top:212px;width:2px;height:1px;background:#e5e5e8"></div>
<div class="abs" style="left:388.44px;top:212px;width:2px;height:1px;background:#e5e5e8"></div>
<div class="abs" style="left:437.18px;top:212px;width:2px;height:1px;background:#e5e5e8"></div>
<div class="abs" style="left:485.92px;top:212px;width:2px;height:1px;background:#e5e5e8"></div>
<div class="abs" style="left:534.66px;top:212px;width:2px;height:1px;background:#e5e5e8"></div>
<div class="abs" style="left:583.40px;top:212px;width:2px;height:1px;background:#e5e5e8"></div>
<div class="abs" style="left:632.15px;top:212px;width:2px;height:1px;background:#e5e5e8"></div>
<div class="abs" style="left:680.89px;top:212px;width:2px;height:1px;background:#e5e5e8"></div>
<div class="abs" style="left:729.63px;top:212px;width:2px;height:1px;background:#e5e5e8"></div>
<div class="abs" style="left:778.37px;top:212px;width:2px;height:1px;background:#e5e5e8"></div>
<div class="abs" style="left:827.11px;top:212px;width:2px;height:1px;background:#e5e5e8"></div>
<div class="abs" style="left:875.85px;top:212px;width:2px;height:1px;background:#e5e5e8"></div>
<div class="abs" style="left:924.60px;top:212px;width:2px;height:1px;background:#e5e5e8"></div>
<div class="abs" style="left:973.34px;top:212px;width:2px;height:1px;background:#e5e5e8"></div>
<div class="abs" style="left:1022.08px;top:212px;width:2px;height:1px;background:#e5e5e8"></div>
<div class="abs" style="left:1070.82px;top:212px;width:2px;height:1px;background:#e5e5e8"></div>
<div class="abs" style="left:1119.56px;top:212px;width:2px;height:1px;background:#e5e5e8"></div>
<div class="abs" style="left:1168.31px;top:212px;width:2px;height:1px;background:#e5e5e8"></div>
<div class="abs" style="left:1217.05px;top:212px;width:2px;height:1px;background:#e5e5e8"></div>
<div class="abs" style="left:1265.79px;top:212px;width:2px;height:1px;background:#e5e5e8"></div>
<div class="abs" style="left:1314.53px;top:212px;width:2px;height:1px;background:#e5e5e8"></div>
<div class="abs" style="left:1363.27px;top:212px;width:2px;height:1px;background:#e5e5e8"></div>
<div class="abs" style="left:1412.02px;top:212px;width:2px;height:1px;background:#e5e5e8"></div>
<div class="abs" style="left:1460.76px;top:212px;width:2px;height:1px;background:#e5e5e8"></div>
</div>
<div class="bar" style="left:386.0px;top:518px;width:1462.26px;background:#cef8ec"><div class="st" style="background:#3d7f97"></div><svg class="av" width="16" height="16" viewBox="0 0 16 16"><rect width="16" height="16" fill="#100f13"/><rect x="11.6" y="1" width="3.4" height="13" fill="#34343a"/><rect x="13.5" y="2" width="1" height="2" fill="#b0b0b8"/><path d="M4.6 16 L5.4 7.4 Q8 5.4 10.6 7.4 L11.4 16 Z" fill="#e6e8ee"/><rect x="5" y="12.4" width="6" height="0.9" fill="#b8bcc6"/><circle cx="8" cy="4" r="2.1" fill="#d6c2b2"/><path d="M5.8 4.4 Q5.6 1.6 8 1.6 Q10.4 1.6 10.2 4.4 Q9.6 2.8 8 2.9 Q6.4 2.8 5.8 4.4Z" fill="#cbbd9f"/><rect x="10.5" y="13.5" width="4.5" height="2.5" fill="#5a5048"/></svg><div class="tx">(1.5h) Jody Murphy</div></div>
<div class="bar" style="left:386.0px;top:544px;width:1462.26px;background:#f7f9e7"><div class="st" style="background:#4b8a3b"></div><svg class="av" width="16" height="16" viewBox="0 0 16 16"><rect width="16" height="16" fill="#d3d3d3"/><rect x="0" y="0" width="4" height="16" fill="#bdbdbd"/><rect x="12" y="0" width="4" height="9" fill="#e2e2e2"/><path d="M2.6 16 L3.4 9 Q8 5.8 12.6 9 L13.4 16 Z" fill="#28282c"/><rect x="4" y="11" width="8" height="2" fill="#3a3a40"/><circle cx="8" cy="4.2" r="2.5" fill="#4a3c34"/><ellipse cx="8" cy="5" rx="1.8" ry="2.3" fill="#b09080"/><rect x="7.3" y="7" width="1.4" height="2" fill="#d8d8d8"/></svg><div class="tx">(7.25h) Peter Russell</div></div>
<div class="bar" style="left:386.0px;top:570px;width:1462.26px;background:#f5f5f5"><div class="st" style="background:#6c7b95"></div><svg class="av" width="16" height="16" viewBox="0 0 16 16"><rect width="16" height="16" fill="#b4aca4"/><rect x="11" y="2" width="5" height="14" fill="#c4bab0"/><path d="M3.8 14 L4.4 6.6 Q8 4.6 11.6 6.6 L12.2 14 Z" fill="#f0f2f4"/><rect x="4.6" y="13.4" width="6.8" height="2.6" fill="#22242a"/><circle cx="8" cy="3.2" r="1.9" fill="#3a2c26"/><ellipse cx="8" cy="3.9" rx="1.4" ry="1.7" fill="#c8a48e"/></svg><div class="tx">(42.25h) George McCormick</div></div>
<div class="bar" style="left:386.0px;top:596px;width:1462.26px;background:#fef6dd"><div class="st" style="background:#8c2b1b"></div><svg class="av" width="16" height="16" viewBox="0 0 16 16"><rect width="16" height="16" fill="#586878"/><rect x="0" y="0" width="16" height="4" fill="#6a7a8a"/><path d="M0.8 16 L1.8 10.6 Q8 7.4 14.2 10.6 L15.2 16 Z" fill="#66789a"/><path d="M3 12 H13 M4 14 H12" stroke="#4a5a7a" stroke-width="0.8"/><circle cx="8.4" cy="4.4" r="3.1" fill="#4a3428"/><ellipse cx="8.4" cy="5.6" rx="2.1" ry="2.7" fill="#c09a82"/></svg><div class="tx">(33.5h) Jack Miller</div></div>
<div class="bar" style="left:386.0px;top:622px;width:1462.26px;background:#faf5f4"><div class="st" style="background:#8c2b1b"></div><svg class="av" width="16" height="16" viewBox="0 0 16 16"><rect width="16" height="16" fill="#f1efef"/><path d="M2 16 Q3 12.6 8 12.6 Q13 12.6 14 16 Z" fill="#e0dcda"/><circle cx="8" cy="6.8" r="6.2" fill="#201818"/><ellipse cx="8.1" cy="7.6" rx="2.7" ry="3.5" fill="#c2937a"/><rect x="6.8" y="9" width="2.6" height="0.9" fill="#a85a50"/></svg><div class="tx">(55.75h) Helen Todd</div></div>
<div class="bar" style="left:386.0px;top:648px;width:1462.26px;background:#f5e9eb"><div class="st" style="background:#c2487b"></div><svg class="av" width="16" height="16" viewBox="0 0 16 16"><rect width="16" height="16" fill="#55382e"/><rect x="0" y="0" width="5" height="8" fill="#7a5a4a"/><rect x="11" y="3" width="5" height="9" fill="#2a1e1c"/><rect x="12" y="5" width="3" height="3" fill="#c8b8a8"/><path d="M3.4 16 L4.4 8.8 Q8 6.6 11.6 8.8 L12.6 16 Z" fill="#ebe0cc"/><circle cx="8.4" cy="4.6" r="2.7" fill="#3a261e"/><ellipse cx="8.2" cy="5.2" rx="1.8" ry="2.3" fill="#d2aa92"/><rect x="3" y="13" width="10" height="3" fill="#d8d0c8"/></svg><div class="tx">(15.5h) Emily Brown</div></div>
<div class="bar" style="left:386.0px;top:674px;width:1462.26px;background:#ecf4cf"><div class="st" style="background:#30392b"></div><svg class="av" width="16" height="16" viewBox="0 0 16 16"><rect width="16" height="16" fill="#f5f0e2"/><path d="M1.6 16 Q2 12.4 5.6 12 L10.4 12 Q14 12.4 14.4 16 Z" fill="#c89a7c"/><path d="M4.4 16 L5 13 Q8 14.6 11 13 L11.6 16 Z" fill="#f6f4f0"/><circle cx="7.8" cy="6" r="5.3" fill="#3b2218"/><circle cx="11.4" cy="8" r="2.6" fill="#3b2218"/><ellipse cx="7.6" cy="7" rx="2.4" ry="3.2" fill="#c18c6c"/><rect x="6.8" y="10" width="1.8" height="2.4" fill="#b88464"/></svg><div class="tx">(53.5h) Carmel Banks</div></div>
<div class="bar" style="left:386.0px;top:700px;width:1462.26px;background:#fcfdff"><div class="st" style="background:#3d5b9b"></div><svg class="av" width="16" height="16" viewBox="0 0 16 16"><rect width="16" height="16" fill="#bbbbbb"/><path d="M1.4 16 Q2 11.8 8 11.8 Q14 11.8 14.6 16 Z" fill="#f2f2f2"/><circle cx="8.2" cy="5.2" r="4.1" fill="#3a261e"/><ellipse cx="8" cy="6.2" rx="2.2" ry="2.9" fill="#c89c84"/><rect x="7" y="9" width="2" height="3" fill="#c09478"/></svg><div class="tx">(32.75h) Ruth Charles</div></div>
<div class="row s" style="top:726px;height:83px;border-top:1px solid #e5e7e9;"></div>
<div class="cb" style="top:760px"><svg class="abs" style="left:0;top:0" width="14" height="14" viewBox="0 0 14 14"><path d="M3.2 7.4 L5.9 10 L10.9 3.9" fill="none" stroke="#2d5bc0" stroke-width="1.3" stroke-linecap="round" stroke-linejoin="round"/></svg></div>
<div class="circ" style="top:742px"></div>
<div class="t" style="left:112px;top:742.1px;color:#1d2d3e;letter-spacing:-0.07px">HR Recruitment</div>
<div class="t" style="left:112px;top:770.3px;color:#556b82">167.25h</div>
<svg class="ov" width="1920" height="945" viewBox="0 0 1920 945"><g transform="translate(0,0)" fill="none" stroke="#2f5dbc" stroke-width="1.7" stroke-linecap="round"><circle cx="77.85" cy="761.3" r="3.75"/><path d="M75.4 765.4 Q71.8 767 71.8 772.1 H76.3"/><circle cx="83.7" cy="769.4" r="2.8"/><path d="M85.8 771.5 L88.6 774.4"/></g></svg>
<div class="grow" style="left:386.0px;top:726px;width:1511px;height:83px;background:#fff">
<div class="abs" style="left:0px;top:0;width:1462.76px;height:83px;background:#e5e5e8"></div>
<div class="abs" style="left:1.00px;top:0;width:46.24px;height:83px;background:#ebf4fc"></div>
<div class="abs" style="left:49.24px;top:0;width:46.74px;height:83px;background:#ebf4fc"></div>
<div class="abs" style="left:97.98px;top:0;width:46.74px;height:83px;background:#ebf4fc"></div>
<div class="abs" style="left:146.73px;top:0;width:46.74px;height:83px;background:#ebf4fc"></div>
<div class="abs" style="left:195.47px;top:0;width:46.74px;height:83px;background:#ebf4fc"></div>
<div class="abs" style="left:244.21px;top:0;width:46.74px;height:83px;background:#ebf4fc"></div>
<div class="abs" style="left:292.95px;top:0;width:46.74px;height:83px;background:#ebf4fc"></div>
<div class="abs" style="left:341.69px;top:0;width:46.74px;height:83px;background:#ebf4fc"></div>
<div class="abs" style="left:390.44px;top:0;width:46.74px;height:83px;background:#ebf4fc"></div>
<div class="abs" style="left:439.18px;top:0;width:46.74px;height:83px;background:#ebf4fc"></div>
<div class="abs" style="left:487.92px;top:0;width:46.74px;height:83px;background:#ebf4fc"></div>
<div class="abs" style="left:536.66px;top:0;width:46.74px;height:83px;background:#ebf4fc"></div>
<div class="abs" style="left:585.40px;top:0;width:46.74px;height:83px;background:#ebf4fc"></div>
<div class="abs" style="left:634.15px;top:0;width:46.74px;height:83px;background:#ebf4fc"></div>
<div class="abs" style="left:682.89px;top:0;width:46.74px;height:83px;background:#ebf4fc"></div>
<div class="abs" style="left:731.63px;top:0;width:46.74px;height:83px;background:#ebf4fc"></div>
<div class="abs" style="left:780.37px;top:0;width:46.74px;height:83px;background:#ebf4fc"></div>
<div class="abs" style="left:829.11px;top:0;width:46.74px;height:83px;background:#ebf4fc"></div>
<div class="abs" style="left:877.85px;top:0;width:46.74px;height:83px;background:#ebf4fc"></div>
<div class="abs" style="left:926.60px;top:0;width:46.74px;height:83px;background:#ebf4fc"></div>
<div class="abs" style="left:975.34px;top:0;width:46.74px;height:83px;background:#ebf4fc"></div>
<div class="abs" style="left:1024.08px;top:0;width:46.74px;height:83px;background:#ebf4fc"></div>
<div class="abs" style="left:1072.82px;top:0;width:46.74px;height:83px;background:#ebf4fc"></div>
<div class="abs" style="left:1121.56px;top:0;width:46.74px;height:83px;background:#ebf4fc"></div>
<div class="abs" style="left:1170.31px;top:0;width:46.74px;height:83px;background:#ebf4fc"></div>
<div class="abs" style="left:1219.05px;top:0;width:46.74px;height:83px;background:#ebf4fc"></div>
<div class="abs" style="left:1267.79px;top:0;width:46.74px;height:83px;background:#ebf4fc"></div>
<div class="abs" style="left:1316.53px;top:0;width:46.74px;height:83px;background:#ebf4fc"></div>
<div class="abs" style="left:1365.27px;top:0;width:46.74px;height:83px;background:#ebf4fc"></div>
<div class="abs" style="left:1414.02px;top:0;width:46.74px;height:83px;background:#ebf4fc"></div>
<div class="abs" style="left:0;top:0;width:1511px;height:1px;background:#e8eaec"></div>
<div class="abs" style="left:0;top:82px;width:1462.26px;height:1px;background:#3f5fa8"></div>
<div class="abs" style="left:47.24px;top:82px;width:2px;height:1px;background:#e5e5e8"></div>
<div class="abs" style="left:95.98px;top:82px;width:2px;height:1px;background:#e5e5e8"></div>
<div class="abs" style="left:144.73px;top:82px;width:2px;height:1px;background:#e5e5e8"></div>
<div class="abs" style="left:193.47px;top:82px;width:2px;height:1px;background:#e5e5e8"></div>
<div class="abs" style="left:242.21px;top:82px;width:2px;height:1px;background:#e5e5e8"></div>
<div class="abs" style="left:290.95px;top:82px;width:2px;height:1px;background:#e5e5e8"></div>
<div class="abs" style="left:339.69px;top:82px;width:2px;height:1px;background:#e5e5e8"></div>
<div class="abs" style="left:388.44px;top:82px;width:2px;height:1px;background:#e5e5e8"></div>
<div class="abs" style="left:437.18px;top:82px;width:2px;height:1px;background:#e5e5e8"></div>
<div class="abs" style="left:485.92px;top:82px;width:2px;height:1px;background:#e5e5e8"></div>
<div class="abs" style="left:534.66px;top:82px;width:2px;height:1px;background:#e5e5e8"></div>
<div class="abs" style="left:583.40px;top:82px;width:2px;height:1px;background:#e5e5e8"></div>
<div class="abs" style="left:632.15px;top:82px;width:2px;height:1px;background:#e5e5e8"></div>
<div class="abs" style="left:680.89px;top:82px;width:2px;height:1px;background:#e5e5e8"></div>
<div class="abs" style="left:729.63px;top:82px;width:2px;height:1px;background:#e5e5e8"></div>
<div class="abs" style="left:778.37px;top:82px;width:2px;height:1px;background:#e5e5e8"></div>
<div class="abs" style="left:827.11px;top:82px;width:2px;height:1px;background:#e5e5e8"></div>
<div class="abs" style="left:875.85px;top:82px;width:2px;height:1px;background:#e5e5e8"></div>
<div class="abs" style="left:924.60px;top:82px;width:2px;height:1px;background:#e5e5e8"></div>
<div class="abs" style="left:973.34px;top:82px;width:2px;height:1px;background:#e5e5e8"></div>
<div class="abs" style="left:1022.08px;top:82px;width:2px;height:1px;background:#e5e5e8"></div>
<div class="abs" style="left:1070.82px;top:82px;width:2px;height:1px;background:#e5e5e8"></div>
<div class="abs" style="left:1119.56px;top:82px;width:2px;height:1px;background:#e5e5e8"></div>
<div class="abs" style="left:1168.31px;top:82px;width:2px;height:1px;background:#e5e5e8"></div>
<div class="abs" style="left:1217.05px;top:82px;width:2px;height:1px;background:#e5e5e8"></div>
<div class="abs" style="left:1265.79px;top:82px;width:2px;height:1px;background:#e5e5e8"></div>
<div class="abs" style="left:1314.53px;top:82px;width:2px;height:1px;background:#e5e5e8"></div>
<div class="abs" style="left:1363.27px;top:82px;width:2px;height:1px;background:#e5e5e8"></div>
<div class="abs" style="left:1412.02px;top:82px;width:2px;height:1px;background:#e5e5e8"></div>
<div class="abs" style="left:1460.76px;top:82px;width:2px;height:1px;background:#e5e5e8"></div>
</div>
<div class="bar" style="left:386.0px;top:731px;width:1462.26px;background:#f7e9e8"><div class="st" style="background:#8c2b1b"></div><svg class="av" width="16" height="16" viewBox="0 0 16 16"><rect width="16" height="16" fill="#33241f"/><ellipse cx="8" cy="18" rx="7.5" ry="5.5" fill="#b9aea4"/><circle cx="8" cy="6" r="5.8" fill="#17100e"/><path d="M5.4 4.4 H8 V12.6 Q5.4 11.5 5.4 8 Z" fill="#9c9088"/><path d="M8 4.4 H10.4 V8 Q10.4 11.5 8 12.6 Z" fill="#bd7a68"/><rect x="7" y="11.5" width="2" height="2.5" fill="#8a6a5a"/></svg><div class="tx">(19.75h) Ann Hamilton</div></div>
<div class="bar" style="left:386.0px;top:757px;width:1462.26px;background:#fbe5f9"><div class="st" style="background:#a72cd1"></div><svg class="av" width="16" height="16" viewBox="0 0 16 16"><rect width="16" height="16" fill="#4b4b4e"/><rect x="0" y="0" width="4" height="16" fill="#3a3a3e"/><rect x="11.5" y="0" width="4.5" height="10" fill="#6a6a6c"/><rect x="12" y="11" width="4" height="5" fill="#7a8088"/><path d="M2.8 16 L3.8 8.6 Q8 6 12.2 8.6 L13.2 16 Z" fill="#1a2032"/><path d="M7.2 7.4 L8 12 L8.8 7.4 Z" fill="#e8e8ec"/><circle cx="8" cy="4" r="2.5" fill="#b6b0a8"/><ellipse cx="8" cy="4.8" rx="1.7" ry="2.1" fill="#c8a692"/></svg><div class="tx">(92.75h) Primrose Hudson</div></div>
<div class="bar" style="left:386.0px;top:783px;width:1462.26px;background:#daedfb"><div class="st" style="background:#2556c5"></div><svg class="av" width="16" height="16" viewBox="0 0 16 16"><rect width="16" height="16" fill="#c3c3c5"/><path d="M1.2 16 L2.4 10.4 Q8 7.4 13.6 10.4 L14.8 16 Z" fill="#a6aab2"/><path d="M6.4 9 L8 16 L9.6 9 Z" fill="#f0f0f2"/><rect x="7.6" y="10.4" width="0.9" height="5.6" fill="#2a2e3a"/><circle cx="8" cy="4.6" r="2.9" fill="#2e2420"/><ellipse cx="8" cy="5.6" rx="2" ry="2.7" fill="#8e6a56"/></svg><div class="tx">(54.75h) Steven Morgan</div></div>
<div class="row" style="top:809px;height:136px;background:#f5f5f5;border-top:1px solid #e5e7e9;"></div>
<div class="cb" style="top:882px"></div>
<div class="circ" style="top:864px"></div>
<div class="t" style="left:112px;top:864.1px;color:#1d2d3e;letter-spacing:-0.07px">Mobile App Development</div>
<div class="t" style="left:112px;top:892.3px;color:#556b82">167.25h</div>
<svg class="ov" width="1920" height="945" viewBox="0 0 1920 945"><g transform="translate(0,0)"><path d="M86 884.2 V881.6 Q86 880.9 85.3 880.9 H72.7 Q72 880.9 72 881.6 V890.2 Q72 890.9 72.7 890.9 H80.4 M78.6 891 V893.8 M76.3 894 H80.8" fill="none" stroke="#2f5dbc" stroke-width="1.7" stroke-linecap="round"/><rect x="83.7" y="887.1" width="5.4" height="8.7" rx="0.6" fill="#2f5dbc"/><rect x="85.3" y="889" width="2.1" height="4.1" fill="#cfe2f8"/></g></svg>
<div class="grow" style="left:386.0px;top:809px;width:1511px;height:136px;background:#fff">
<div class="abs" style="left:0px;top:0;width:1462.76px;height:136px;background:#e5e5e8"></div>
<div class="abs" style="left:1.00px;top:0;width:46.24px;height:136px;background:#f6f6f6"></div>
<div class="abs" style="left:49.24px;top:0;width:46.74px;height:136px;background:#f6f6f6"></div>
<div class="abs" style="left:97.98px;top:0;width:46.74px;height:136px;background:#f6f6f6"></div>
<div class="abs" style="left:146.73px;top:0;width:46.74px;height:136px;background:#f6f6f6"></div>
<div class="abs" style="left:195.47px;top:0;width:46.74px;height:136px;background:#e9e9e9"></div>
<div class="abs" style="left:244.21px;top:0;width:46.74px;height:136px;background:#e9e9e9"></div>
<div class="abs" style="left:292.95px;top:0;width:46.74px;height:136px;background:#f6f6f6"></div>
<div class="abs" style="left:341.69px;top:0;width:46.74px;height:136px;background:#f6f6f6"></div>
<div class="abs" style="left:390.44px;top:0;width:46.74px;height:136px;background:#f6f6f6"></div>
<div class="abs" style="left:439.18px;top:0;width:46.74px;height:136px;background:#f6f6f6"></div>
<div class="abs" style="left:487.92px;top:0;width:46.74px;height:136px;background:#f6f6f6"></div>
<div class="abs" style="left:536.66px;top:0;width:46.74px;height:136px;background:#e9e9e9"></div>
<div class="abs" style="left:585.40px;top:0;width:46.74px;height:136px;background:#e9e9e9"></div>
<div class="abs" style="left:634.15px;top:0;width:46.74px;height:136px;background:#f6f6f6"></div>
<div class="abs" style="left:682.89px;top:0;width:46.74px;height:136px;background:#f6f6f6"></div>
<div class="abs" style="left:731.63px;top:0;width:46.74px;height:136px;background:#f6f6f6"></div>
<div class="abs" style="left:780.37px;top:0;width:46.74px;height:136px;background:#f6f6f6"></div>
<div class="abs" style="left:829.11px;top:0;width:46.74px;height:136px;background:#f6f6f6"></div>
<div class="abs" style="left:877.85px;top:0;width:46.74px;height:136px;background:#e9e9e9"></div>
<div class="abs" style="left:926.60px;top:0;width:46.74px;height:136px;background:#e9e9e9"></div>
<div class="abs" style="left:975.34px;top:0;width:46.74px;height:136px;background:#f6f6f6"></div>
<div class="abs" style="left:1024.08px;top:0;width:46.74px;height:136px;background:#f6f6f6"></div>
<div class="abs" style="left:1072.82px;top:0;width:46.74px;height:136px;background:#f6f6f6"></div>
<div class="abs" style="left:1121.56px;top:0;width:46.74px;height:136px;background:#f6f6f6"></div>
<div class="abs" style="left:1170.31px;top:0;width:46.74px;height:136px;background:#f6f6f6"></div>
<div class="abs" style="left:1219.05px;top:0;width:46.74px;height:136px;background:#e9e9e9"></div>
<div class="abs" style="left:1267.79px;top:0;width:46.74px;height:136px;background:#e9e9e9"></div>
<div class="abs" style="left:1316.53px;top:0;width:46.74px;height:136px;background:#f6f6f6"></div>
<div class="abs" style="left:1365.27px;top:0;width:46.74px;height:136px;background:#f6f6f6"></div>
<div class="abs" style="left:1414.02px;top:0;width:46.74px;height:136px;background:#f6f6f6"></div>
<div class="abs" style="left:0;top:0;width:1511px;height:1px;background:#e8eaec"></div>
</div>
<div class="bar" style="left:386.0px;top:814px;width:1462.26px;background:#fff;border-color:#3b5a9e"><div class="st" style="background:#3d7f97"></div><svg class="av" width="16" height="16" viewBox="0 0 16 16"><rect width="16" height="16" fill="#100f13"/><rect x="11.6" y="1" width="3.4" height="13" fill="#34343a"/><rect x="13.5" y="2" width="1" height="2" fill="#b0b0b8"/><path d="M4.6 16 L5.4 7.4 Q8 5.4 10.6 7.4 L11.4 16 Z" fill="#e6e8ee"/><rect x="5" y="12.4" width="6" height="0.9" fill="#b8bcc6"/><circle cx="8" cy="4" r="2.1" fill="#d6c2b2"/><path d="M5.8 4.4 Q5.6 1.6 8 1.6 Q10.4 1.6 10.2 4.4 Q9.6 2.8 8 2.9 Q6.4 2.8 5.8 4.4Z" fill="#cbbd9f"/><rect x="10.5" y="13.5" width="4.5" height="2.5" fill="#5a5048"/></svg><div class="tx" style="color:#3f6bc4">(45h) Jody Murphy</div></div>
<div class="bar" style="left:386.0px;top:840px;width:1462.26px;background:#f7f9e7"><div class="st" style="background:#4b8a3b"></div><svg class="av" width="16" height="16" viewBox="0 0 16 16"><rect width="16" height="16" fill="#d3d3d3"/><rect x="0" y="0" width="4" height="16" fill="#bdbdbd"/><rect x="12" y="0" width="4" height="9" fill="#e2e2e2"/><path d="M2.6 16 L3.4 9 Q8 5.8 12.6 9 L13.4 16 Z" fill="#28282c"/><rect x="4" y="11" width="8" height="2" fill="#3a3a40"/><circle cx="8" cy="4.2" r="2.5" fill="#4a3c34"/><ellipse cx="8" cy="5" rx="1.8" ry="2.3" fill="#b09080"/><rect x="7.3" y="7" width="1.4" height="2" fill="#d8d8d8"/></svg><div class="tx">(21.25h) Peter Russell</div></div>
<div class="bar" style="left:386.0px;top:866px;width:1462.26px;background:#fbf2f9"><div class="st" style="background:#6a20a1"></div><svg class="av" width="16" height="16" viewBox="0 0 16 16"><rect width="16" height="16" fill="#a2a2a6"/><rect x="0" y="0" width="4" height="10" fill="#8e8e94"/><path d="M1 16 L2 11 Q8 8.2 14 11 L15 16 Z" fill="#d8e0ea"/><ellipse cx="8" cy="5.4" rx="2.8" ry="3.5" fill="#c8aa98"/><path d="M5.2 4.6 Q5.4 1.6 8 1.6 Q10.6 1.6 10.8 4.6 Q10 2.8 8 2.9 Q6 2.8 5.2 4.6Z" fill="#b4b0ac"/><rect x="5.6" y="4.8" width="4.8" height="0.9" fill="#4a4a50"/></svg><div class="tx">(10.25h) Gerard Ferguson</div></div>
<div class="bar" style="left:386.0px;top:892px;width:1462.26px;background:#e3fbf5"><div class="st" style="background:#30496b"></div><svg class="av" width="16" height="16" viewBox="0 0 16 16"><rect width="16" height="16" fill="#f6f6f6"/><path d="M0.8 16 Q1.4 11.6 5.4 11.2 L10.6 11.2 Q14.6 11.6 15.2 16 Z" fill="#9aa0a8"/><path d="M5.8 11.2 L8 16 L10.2 11.2 Z" fill="#36587e"/><ellipse cx="8" cy="6" rx="2.7" ry="3.6" fill="#c89e86"/><path d="M5.1 5.2 Q4.9 1.6 8 1.6 Q11.1 1.6 10.9 5.2 Q10.2 3.4 8 3.5 Q5.8 3.4 5.1 5.2Z" fill="#3a2a22"/><path d="M5.6 7.4 Q6 10 8 10.2 Q10 10 10.4 7.4 Q9.6 8.8 8 8.7 Q6.4 8.8 5.6 7.4Z" fill="#6a5042"/></svg><div class="tx">(21.25h) Lewis Neal</div></div>
<div class="bar" style="left:386.0px;top:918px;width:1462.26px;background:#ecf4cf"><div class="st" style="background:#30392b"></div><svg class="av" width="16" height="16" viewBox="0 0 16 16"><rect width="16" height="16" fill="#f5f0e2"/><path d="M1.6 16 Q2 12.4 5.6 12 L10.4 12 Q14 12.4 14.4 16 Z" fill="#c89a7c"/><path d="M4.4 16 L5 13 Q8 14.6 11 13 L11.6 16 Z" fill="#f6f4f0"/><circle cx="7.8" cy="6" r="5.3" fill="#3b2218"/><circle cx="11.4" cy="8" r="2.6" fill="#3b2218"/><ellipse cx="7.6" cy="7" rx="2.4" ry="3.2" fill="#c18c6c"/><rect x="6.8" y="10" width="1.8" height="2.4" fill="#b88464"/></svg><div class="tx">(62.25h) Carmel Banks</div></div>
<div class="abs" style="left:8px;top:326px;width:1889px;height:1px;background:#9ea5ac"></div>
<div class="abs" style="left:1896px;top:326px;width:1px;height:611px;background:#dfdfdf"></div>
<div class="abs" style="left:1897px;top:246px;width:15px;height:691px;background:#fff;border-radius:0 12px 12px 0"></div>
<div class="abs" style="left:1900px;top:315px;width:9px;height:308px;border-radius:5px;background:#7f91a8"></div>
<svg class="ov" width="1920" height="945" viewBox="0 0 1920 945"><path d="M1900.5 257.3 L1904.5 251.4 L1908.5 257.3 Z" fill="#7f91a8" stroke="#7f91a8" stroke-width="0.8" stroke-linejoin="round"/><path d="M1900.5 926.6 L1904.5 932.3 L1908.5 926.6 Z" fill="#7f91a8" stroke="#7f91a8" stroke-width="0.8" stroke-linejoin="round"/></svg>
<div class="abs" style="left:386px;top:937px;width:1534px;height:8px;background:#f5f5f5"></div>
<svg class="ov" width="1920" height="945" viewBox="0 0 1920 945"><path d="M49 29.6 L44.4 34 L49 38.4" fill="none" stroke="#fff" stroke-width="2" stroke-linecap="round" stroke-linejoin="round"/><path d="M74 32.1 L78.2 36.3 L82.4 32.1" fill="none" stroke="#fff" stroke-width="1.8" stroke-linecap="round" stroke-linejoin="round"/><path d="M102 26.6 L128 26.6 L120 40.5 L115 32.6 L110.5 40.5 Z" fill="#69a3e3"/><path d="M120 26.6 L128 26.6 L123.4 34.6 L119 31 Z" fill="#8a84dc" opacity=".75"/><path d="M118 34.5 L122.5 34.5 L120 40.5 L116.6 35 Z" fill="#4f8ae6" opacity=".6"/><g fill="none" stroke="#ffffff" stroke-linejoin="round" stroke-linecap="round"><rect x="715" y="29.1" width="10.2" height="11.9" rx="0.7" stroke-width="2.1"/><path d="M717.6 35.5 L719.2 37.3 L722.5 33.6" stroke-width="1.8"/></g><rect x="717" y="25.9" width="6.2" height="4.8" rx="1.1" fill="#ffffff"/><rect x="719.1" y="27.9" width="2" height="0.9" rx="0.4" fill="#8319e6"/><g fill="none" stroke="#ffffff" stroke-width="1.8" stroke-linejoin="round" stroke-linecap="round"><path d="M802.9 27.5 V37.1 L810.8 40.4 L818.4 37.1 V27.5 H815 Q811 27.9 810.8 31.4 V40.2"/></g><path d="M802.9 26.7 H808.3 V33.8 L806.9 32.5 L805.5 33.8 V28.3 H802.9 Z" fill="#ffffff"/><g fill="none" stroke="#ffffff" stroke-width="2.1" stroke-linejoin="round" stroke-linecap="butt"><path d="M891.8 39.8 H889.6 Q888.2 39.8 888.2 38.4 V29.5 Q888.2 28.1 889.6 28.1 H901.6 Q903 28.1 903 29.5 V30.8"/></g><path d="M890.6 31 H898 M890.6 34.3 H893.8" stroke="#ffffff" stroke-width="1.5" fill="none"/><rect x="895" y="34" width="3" height="2.9" rx="0.8" fill="#ffffff"/><rect x="899.1" y="33" width="3.2" height="3" rx="0.8" fill="#ffffff"/><path d="M893 41 Q893.4 38.1 896.6 38.1 Q899.8 38.1 900.2 41 Z" fill="#ffffff"/><path d="M899.6 37.9 Q900.4 37.4 901.2 37.4 Q904 37.5 904.3 40 H900.9 Q900.6 38.6 899.6 37.9 Z" fill="#ffffff"/><g fill="none" stroke="#ffffff" stroke-linejoin="miter" stroke-linecap="butt"><path d="M1015.2 29.9 V27.1 H1007.7 L1004.1 31.2 V41 H1008.9" stroke-width="2.1"/><circle cx="1014.5" cy="36.8" r="4.5" stroke-width="2"/><path d="M1014.5 34.2 V37 L1016.3 38.3" stroke-width="1.4"/></g><path d="M1008.4 27.6 V31.8 H1004.6 Z" fill="#ffffff"/><rect x="1127.0500000000002" y="27.049999999999997" width="2.7" height="2.7" rx="0.7" fill="#ffffff"/><rect x="1127.0500000000002" y="32.65" width="2.7" height="2.7" rx="0.7" fill="#ffffff"/><rect x="1127.0500000000002" y="38.25" width="2.7" height="2.7" rx="0.7" fill="#ffffff"/><rect x="1132.95" y="27.049999999999997" width="2.7" height="2.7" rx="0.7" fill="#ffffff"/><rect x="1132.95" y="32.65" width="2.7" height="2.7" rx="0.7" fill="#ffffff"/><rect x="1132.95" y="38.25" width="2.7" height="2.7" rx="0.7" fill="#ffffff"/><rect x="1138.8500000000001" y="27.049999999999997" width="2.7" height="2.7" rx="0.7" fill="#ffffff"/><rect x="1138.8500000000001" y="32.65" width="2.7" height="2.7" rx="0.7" fill="#ffffff"/><rect x="1138.8500000000001" y="38.25" width="2.7" height="2.7" rx="0.7" fill="#ffffff"/><g fill="none" stroke="#b03cc8" stroke-linejoin="round" stroke-linecap="round"><path d="M1729.4 27.3 L1735.6 30.7 V37.4 L1729.4 40.8 L1723.2 37.4 V30.7 Z" stroke-width="2.1"/><path d="M1729.4 40 V36 M1729.4 34.4 L1733.6 32 M1729.4 34.4 L1726.4 32.8 M1729.4 27.6 V30.4" stroke-width="1.5"/></g><g fill="none" stroke="#ffffff" stroke-width="2" stroke-linejoin="round" stroke-linecap="round"><path d="M1754 38.2 Q1755.8 36.6 1755.8 32.6 Q1755.8 27.8 1760.1 27.8 Q1764.4 27.8 1764.4 32.6 Q1764.4 36.6 1766.2 38.2 Z"/></g><path d="M1757.6 39.2 H1762.6 L1761.6 41.5 H1758.6 Z" fill="#ffffff"/><g fill="none" stroke="#ffffff" stroke-linecap="round" stroke-linejoin="round"><circle cx="1792.1" cy="34.1" r="7.1" stroke-width="2"/><path d="M1789.8 32.3 Q1789.8 30.2 1792.1 30.2 Q1794.4 30.2 1794.4 32.1 Q1794.4 33.4 1792.1 34.6 V35.6" stroke-width="1.9"/></g><rect x="1791" y="37.4" width="2.2" height="2" rx="0.5" fill="#ffffff"/><clipPath id="avc"><circle cx="1832" cy="33.9" r="15.3"/></clipPath><g clip-path="url(#avc)"><rect x="1816" y="18" width="32" height="32" fill="#0f0f0e"/><rect x="1838" y="22" width="5" height="20" fill="#2a2c34"/><rect x="1842.6" y="24" width="3.6" height="7.5" fill="#c9d2da"/><rect x="1841" y="32" width="6" height="8" fill="#3a3c40"/><path d="M1838.4 41 L1847 39.6 V44 L1838.4 45 Z" fill="#8d7a68"/><path d="M1825.6 44 L1826.6 33 Q1827.2 30.4 1830 30 L1835.4 30 Q1838.6 30.6 1839.2 33.4 L1840 42 L1836.4 44.6 Z" fill="#dfe5f1"/><path d="M1822.4 50 L1824.6 43 L1836.8 43.4 L1837.4 50 Z" fill="#f1eff2"/><path d="M1829 29.4 Q1828.2 21 1832.6 20.8 Q1837 21 1836.4 29.4 L1834.6 31 L1830.6 31 Z" fill="#b3ab9b"/><ellipse cx="1832.7" cy="26.4" rx="2.1" ry="3" fill="#caa88f"/><rect x="1831.4" y="28.6" width="2.6" height="3" fill="#c4a48c"/><path d="M1831.2 31 L1832.7 33.6 L1834.2 31 Z" fill="#c9b09c"/></g><rect x="1864.8999999999999" y="27.0" width="3.4" height="3.4" fill="#ffffff"/><rect x="1864.8999999999999" y="32.4" width="3.4" height="3.4" fill="#ffffff"/><rect x="1864.8999999999999" y="37.8" width="3.4" height="3.4" fill="#ffffff"/><rect x="1870.3" y="27.0" width="3.4" height="3.4" fill="#ffffff"/><rect x="1870.3" y="32.4" width="3.4" height="3.4" fill="#ffffff"/><rect x="1870.3" y="37.8" width="3.4" height="3.4" fill="#ffffff"/><rect x="1875.7" y="27.0" width="3.4" height="3.4" fill="#ffffff"/><rect x="1875.7" y="32.4" width="3.4" height="3.4" fill="#ffffff"/><rect x="1875.7" y="37.8" width="3.4" height="3.4" fill="#ffffff"/><g transform="translate(0,0)" fill="none" stroke="#2d5bc0" stroke-width="1.7" stroke-linecap="round"><rect x="43.85" y="84.85" width="12.4" height="12.4" rx="2"/><path d="M47.1 82.8 V86.6 M53.1 82.8 V86.6 M44 88.9 H56.2"/><path d="M46.3 93 H47.7 M49.3 93 H50.7 M52.3 93 H53.7" stroke-width="1.7" stroke-linecap="butt"/></g><g transform="translate(129,0)" fill="none" stroke="#131e29" stroke-width="1.7" stroke-linecap="round"><rect x="43.85" y="84.85" width="12.4" height="12.4" rx="2"/><path d="M47.1 82.8 V86.6 M53.1 82.8 V86.6 M44 88.9 H56.2"/></g><g fill="none" stroke="#131e29" stroke-width="1.7" stroke-linejoin="round"><rect x="286.6" y="83.8" width="12.8" height="12.8" rx="2"/><path d="M286.6 88.1 H299.4 M286.6 92.3 H299.4 M290.9 83.8 V96.6 M295.1 83.8 V96.6" stroke-width="1.5"/></g><path d="M87.5 141.6 L91.7 145.8 L95.9 141.6" fill="none" stroke="#2d5bc0" stroke-width="1.6" stroke-linecap="round" stroke-linejoin="round"/><path d="M134.4 139.4 L128.9 144 L134.4 148.6" fill="none" stroke="#2d5bc0" stroke-width="1.6" stroke-linecap="round" stroke-linejoin="round"/><path d="M398.6 139.4 L404.1 144 L398.6 148.6" fill="none" stroke="#2d5bc0" stroke-width="1.6" stroke-linecap="round" stroke-linejoin="round"/><g fill="none" stroke="#2d5bc0" stroke-width="1.7" stroke-linecap="round"><path d="M370.4 151.1 H364.8 Q362.85 151.1 362.85 149.2 V140.8 Q362.85 138.9 364.8 138.9 H373.2 Q375.15 138.9 375.15 140.8 V147.6"/><path d="M366 136.8 V140.6 M372.2 136.8 V140.6 M363.2 143 H365 M373.6 143 H375"/><circle cx="369.5" cy="145.5" r="2.7"/><path d="M371.6 147.6 L375.4 151.3"/></g><path d="M1648.6 144 H1662.4 M1655.5 137.1 V150.9" stroke="#ffffff" stroke-width="1.8" fill="none" stroke-linecap="round"/><path transform="translate(-31.59999999999991,0)" d="M1776.7 136.5 H1787.5 L1783.3 141.9 V145.9 L1780.9 147.5 V141.9 Z" fill="none" stroke="#2d5bc0" stroke-width="1.6" stroke-linejoin="round"/><path d="M1753.4 148.6 H1759.8 M1756.6 145.4 V151.8" stroke="#2d5bc0" stroke-width="1.7" fill="none"/><path transform="translate(0,0)" d="M1776.7 136.5 H1787.5 L1783.3 141.9 V145.9 L1780.9 147.5 V141.9 Z" fill="none" stroke="#2d5bc0" stroke-width="1.6" stroke-linejoin="round"/><path d="M1787.4 147.4 L1791.8 151.8 M1791.8 147.4 L1787.4 151.8" stroke="#2d5bc0" stroke-width="1.7" fill="none"/><g fill="none" stroke="#2d5bc0" stroke-width="1.6" stroke-linejoin="round"><path d="M1820.2 138.6 V136.7 H1813.6 L1809.5 140.6 V151 H1820.4"/><path d="M1813.6 136.9 V140.6 H1809.8" stroke-width="1"/></g><rect x="1814.6" y="141.1" width="9.3" height="7.7" rx="0.6" fill="#2d5bc0"/><path d="M1816.1 143.7 H1818.5 M1819.8 143.7 H1822.3 M1816.1 146.5 H1818.5 M1819.8 146.5 H1822.3" stroke="#fff" stroke-width="1.2"/><g fill="none" stroke="#2d5bc0" stroke-width="1.7" stroke-linecap="round"><path d="M1840.4 136.4 L1843.4 139.3 M1852.9 148.6 L1855.8 151.5"/><ellipse cx="1845.4" cy="141.3" rx="3.4" ry="2.1" transform="rotate(-45 1845.4 141.3)"/><ellipse cx="1850.9" cy="146.6" rx="3.4" ry="2.1" transform="rotate(-45 1850.9 146.6)"/><path d="M1848.5 142.2 L1850.2 143.9 M1846.3 144.4 L1848 146.1" stroke-width="1.2"/></g><g fill="none" stroke="#2d5bc0" stroke-width="1.7" stroke-linecap="round" stroke-linejoin="round"><path d="M1886.9 141.3 A7.3 7.3 0 1 0 1887.2 145.8"/><path d="M1887.4 136.6 V141.7 H1882.3"/></g><g fill="none" stroke="#2d5bc0"><rect x="49.9" y="202.9" width="12.3" height="14.2" rx="1.2" stroke-width="1.7"/><path d="M56.2 206 H59.8 M56.2 209.9 H59.8 M56.2 213.8 H59.8" stroke-width="1.4"/><path d="M53.4 205.8 V210" stroke-width="0.9"/></g><circle cx="53.4" cy="205.9" r="0.95" fill="#2d5bc0"/><circle cx="53.4" cy="209.8" r="0.95" fill="#2d5bc0"/><circle cx="53.4" cy="213.8" r="0.95" fill="#2d5bc0"/><g fill="none" stroke="#2d5bc0" stroke-width="1.7" stroke-linecap="round" stroke-linejoin="round"><path d="M280.4 202.9 H289 Q291.6 202.9 291.6 205.6 V208.6"/><path d="M291.8 217.1 H283.2 Q280.6 217.1 280.6 214.4 V211.4"/></g><path d="M288.9 207 H294.3 L291.6 210.1 Z" fill="#2d5bc0" stroke="#2d5bc0" stroke-width="0.6" stroke-linejoin="round"/><path d="M277.9 213 H283.3 L280.6 209.9 Z" fill="#2d5bc0" stroke="#2d5bc0" stroke-width="0.6" stroke-linejoin="round"/></svg></div></body></html>
